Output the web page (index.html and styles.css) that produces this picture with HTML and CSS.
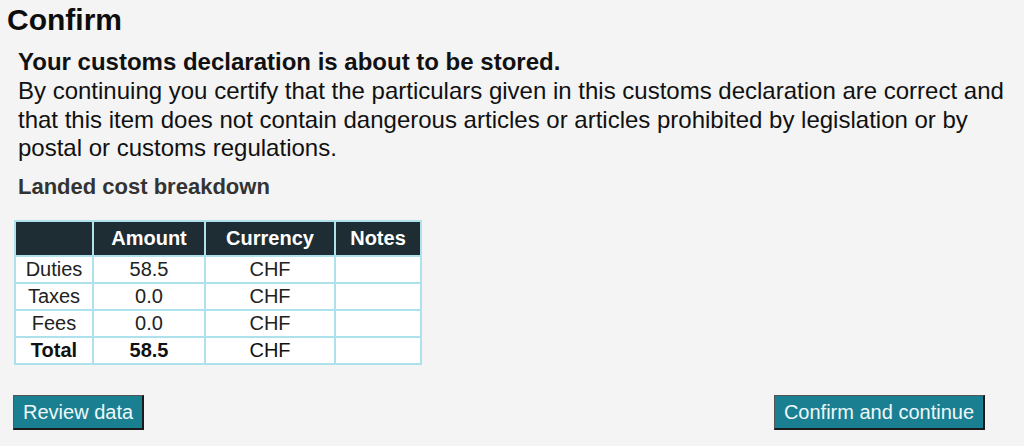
FILE: index.html
```html
<!DOCTYPE html>
<html lang="en">
<head>
<meta charset="utf-8">
<title>Confirm</title>
<link rel="stylesheet" href="styles.css">
</head>
<body>
<div class="page">
  <h1 class="page-title">Confirm</h1>
  <div class="content">
    <p class="lead"><strong>Your customs declaration is about to be stored.</strong><br>By continuing you certify that the particulars given in this customs declaration are correct and that this item does not contain dangerous articles or articles prohibited by legislation or by postal or customs regulations.</p>
    <h2 class="section-title">Landed cost breakdown</h2>
  </div>
  <table class="cost-table">
    <colgroup>
      <col class="c1"><col class="c2"><col class="c3"><col class="c4">
    </colgroup>
    <thead>
      <tr><th></th><th>Amount</th><th>Currency</th><th>Notes</th></tr>
    </thead>
    <tbody>
      <tr><td>Duties</td><td>58.5</td><td>CHF</td><td></td></tr>
      <tr><td>Taxes</td><td>0.0</td><td>CHF</td><td></td></tr>
      <tr><td>Fees</td><td>0.0</td><td>CHF</td><td></td></tr>
      <tr class="total"><td>Total</td><td>58.5</td><td>CHF</td><td></td></tr>
    </tbody>
  </table>
  <div class="actions">
    <button class="btn">Review data</button>
    <button class="btn">Confirm and continue</button>
  </div>
</div>
</body>
</html>
```
FILE: styles.css
```css
html, body {
  margin: 0;
  padding: 0;
  background: #f4f4f4;
}
body {
  font-family: "Liberation Sans", Arial, sans-serif;
  color: #111;
}
.page {
  padding-top: 3px;
}
.page-title {
  margin: 0 0 0 7px;
  font-size: 30px;
  font-weight: bold;
  line-height: 34px;
  color: #0d0d0d;
}
.content {
  padding: 0 14px 0 18px;
}
.lead {
  margin: 11px 0 0 0;
  font-size: 24px;
  line-height: 28.8px;
  color: #111;
}
.lead strong {
  font-weight: bold;
}
.section-title {
  margin: 11px 0 0 0;
  font-size: 22px;
  line-height: 26px;
  font-weight: bold;
  color: #333;
}
.cost-table {
  margin: 20px 0 0 14px;
  border-collapse: collapse;
  table-layout: fixed;
  width: 406px;
  background: #fff;
  font-size: 20px;
}
.c1 { width: 78px; }
.c2 { width: 112px; }
.c3 { width: 130px; }
.c4 { width: 86px; }
.cost-table th,
.cost-table td {
  border: 2px solid #ade2ec;
  text-align: center;
  padding: 1px 2px 1px 2px;
  line-height: 23px;
  color: #222;
}
.cost-table th {
  background: #1e2d33;
  color: #fff;
  font-weight: bold;
  padding: 5px 2px;
}
.cost-table .total td {
  font-weight: bold;
  color: #111;
}
.cost-table .total td:nth-child(3) {
  font-weight: normal;
}
.actions {
  display: flex;
  justify-content: space-between;
  align-items: flex-start;
  margin-top: 30px;
  padding: 0 39px 0 13px;
}
.btn {
  font-family: "Liberation Sans", Arial, sans-serif;
  font-size: 20px;
  line-height: 23px;
  color: #eef8fa;
  background: #1b7f92;
  border-style: solid;
  border-width: 1px 2px 2px 1px;
  border-color: #555 #1a1a1a #1a1a1a #555;
  padding: 5px 9px 4px 9px;
  margin: 0;
  cursor: pointer;
}
```
